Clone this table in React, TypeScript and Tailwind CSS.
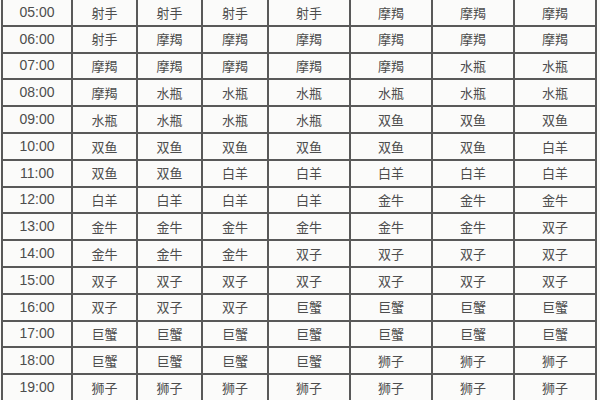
import React from "react";

const rows: [string, string[]][] = [
  ["05:00", ["射手", "射手", "射手", "射手", "摩羯", "摩羯", "摩羯"]],
  ["06:00", ["射手", "摩羯", "摩羯", "摩羯", "摩羯", "摩羯", "摩羯"]],
  ["07:00", ["摩羯", "摩羯", "摩羯", "摩羯", "摩羯", "水瓶", "水瓶"]],
  ["08:00", ["摩羯", "水瓶", "水瓶", "水瓶", "水瓶", "水瓶", "水瓶"]],
  ["09:00", ["水瓶", "水瓶", "水瓶", "水瓶", "双鱼", "双鱼", "双鱼"]],
  ["10:00", ["双鱼", "双鱼", "双鱼", "双鱼", "双鱼", "双鱼", "白羊"]],
  ["11:00", ["双鱼", "双鱼", "白羊", "白羊", "白羊", "白羊", "白羊"]],
  ["12:00", ["白羊", "白羊", "白羊", "白羊", "金牛", "金牛", "金牛"]],
  ["13:00", ["金牛", "金牛", "金牛", "金牛", "金牛", "金牛", "双子"]],
  ["14:00", ["金牛", "金牛", "金牛", "双子", "双子", "双子", "双子"]],
  ["15:00", ["双子", "双子", "双子", "双子", "双子", "双子", "双子"]],
  ["16:00", ["双子", "双子", "双子", "巨蟹", "巨蟹", "巨蟹", "巨蟹"]],
  ["17:00", ["巨蟹", "巨蟹", "巨蟹", "巨蟹", "巨蟹", "巨蟹", "巨蟹"]],
  ["18:00", ["巨蟹", "巨蟹", "巨蟹", "巨蟹", "狮子", "狮子", "狮子"]],
  ["19:00", ["狮子", "狮子", "狮子", "狮子", "狮子", "狮子", "狮子"]],
];

export default function App() {
  return (
    <div className="w-[600px] h-[400px] overflow-hidden bg-[#fbfbfa] pl-[1px]">
      <div className="grid w-[596px] grid-cols-[70px_65px_65px_66px_82px_82px_82px_82px] auto-rows-[26.8px] border-l-2 border-[#595959] text-[#4d4d4d]">
        {rows.map(([t, cells]) => (
          <React.Fragment key={t}>
            <div className="flex items-center justify-center border-r-2 border-b-2 border-[#595959] text-[14px] font-['Liberation_Sans',sans-serif]">
              {t}
            </div>
            {cells.map((c, i) => (
              <div
                key={i}
                className="flex items-center justify-center border-r-2 border-b-2 border-[#595959] text-[13px] font-['Noto_Sans_CJK_SC',sans-serif]"
              >
                {c}
              </div>
            ))}
          </React.Fragment>
        ))}
      </div>
    </div>
  );
}
